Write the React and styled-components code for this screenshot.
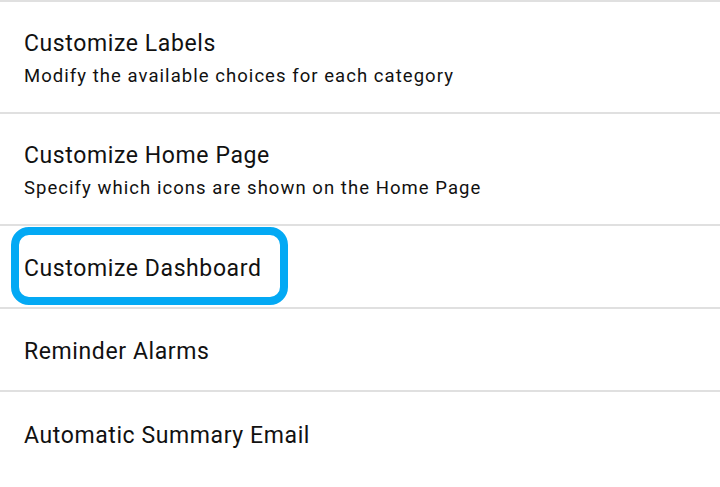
import React from 'react';
import styled, { createGlobalStyle } from 'styled-components';

const GlobalStyle = createGlobalStyle`
  body {
    margin: 0;
    background: #ffffff;
    font-family: Roboto, "Noto Sans", sans-serif;
  }
`;

const List = styled.div`
  width: 720px;
  border-top: 2px solid #e0e0e0;
`;

const Row = styled.div`
  position: relative;
  box-sizing: border-box;
  height: ${({ $tall }) => ($tall ? '112px' : '83px')};
  display: flex;
  flex-direction: column;
  justify-content: center;
  padding: 4px 24px 0;
  border-bottom: ${({ $last }) => ($last ? 'none' : '2px solid #e0e0e0')};
`;

const Title = styled.div`
  font-size: 23px;
  line-height: 26px;
  letter-spacing: 0.6px;
  color: #111111;
`;

const Subtitle = styled.div`
  font-size: 18.5px;
  line-height: 22px;
  letter-spacing: 1.05px;
  margin-top: 8px;
  color: #111111;
`;

const Focus = styled.div`
  position: absolute;
  left: 11px;
  top: 1px;
  width: 277px;
  height: 78px;
  box-sizing: border-box;
  border: 8px solid #03a9f4;
  border-radius: 18px;
  pointer-events: none;
`;

const items = [
  { title: 'Customize Labels', sub: 'Modify the available choices for each category' },
  { title: 'Customize Home Page', sub: 'Specify which icons are shown on the Home Page' },
  { title: 'Customize Dashboard', focused: true },
  { title: 'Reminder Alarms' },
  { title: 'Automatic Summary Email' },
];

const App = () => {
  return (
    <>
      <GlobalStyle />
      <List>
        {items.map((item, i) => (
          <Row key={item.title} $tall={!!item.sub} $last={i === items.length - 1}>
            <Title>{item.title}</Title>
            {item.sub && <Subtitle>{item.sub}</Subtitle>}
            {item.focused && <Focus />}
          </Row>
        ))}
      </List>
    </>
  );
};

export default App;
